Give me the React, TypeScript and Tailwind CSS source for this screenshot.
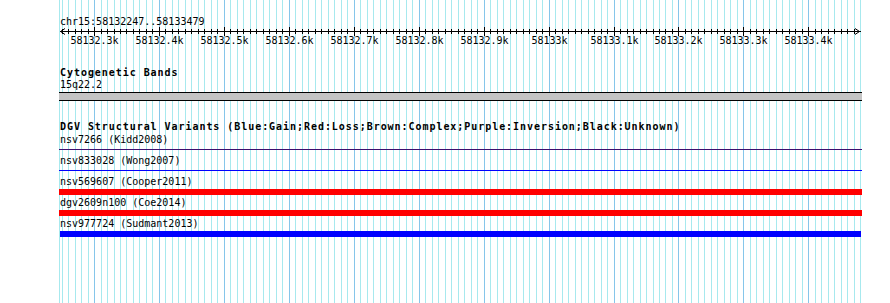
import React from "react";

const START = 58132247;
const PX_PER_BP = 0.6494;
const ORIGIN = 0.6; // where START sits inside the track (track left edge = 59px)

const toX = (bp: number) => ORIGIN + (bp - START) * PX_PER_BP;

interface Tick {
  bp: number;
  x: number;
  major: boolean;
}

const ticks: Tick[] = [];
for (let bp = 58132250; bp <= 58133480; bp += 10) {
  ticks.push({ bp, x: Math.round(toX(bp)), major: bp % 100 === 0 });
}

const majorLabel = (bp: number) => (bp % 1000 === 0 ? `${bp / 1000}k` : `${(bp / 1000).toFixed(1)}k`);

interface Variant {
  name: string;
  kind: "line" | "bar";
  color: string;
}

const variants: Variant[] = [
  { name: "nsv7266 (Kidd2008)", kind: "line", color: "bg-[#3c0f6e]" },
  { name: "nsv833028 (Wong2007)", kind: "line", color: "bg-[#0000ff]" },
  { name: "nsv569607 (Cooper2011)", kind: "bar", color: "bg-[#ff0000]" },
  { name: "dgv2609n100 (Coe2014)", kind: "bar", color: "bg-[#ff0000]" },
  { name: "nsv977724 (Sudmant2013)", kind: "bar", color: "bg-[#0000ff] ml-[1px] mr-[1px]" },
];

const Grid = () => (
  <svg className="absolute top-0 left-[59px] z-0" width={803} height={303}>
    <rect x={0} y={0} width={1} height={303} fill="#a7e9ee" />
    {ticks.map((t) => (
      <rect key={t.bp} x={t.x} y={0} width={1} height={303} fill={t.major ? "#86c6ea" : "#a7e9ee"} />
    ))}
  </svg>
);

const Ruler = () => (
  <svg className="block" width={803} height={9} shapeRendering="crispEdges">
    <rect x={1} y={4} width={801} height={1} fill="#000" />
    {ticks
      .filter((t) => t.x > 2 && t.x < 800)
      .map((t) => (
        <rect key={t.bp} x={t.x} y={t.major ? 0 : 2} width={1} height={t.major ? 9 : 5} fill="#000" />
      ))}
    <polyline points="6,1.5 1.5,4.5 6,7.5" fill="none" stroke="#000" strokeWidth={1} shapeRendering="auto" />
    <polyline points="796,1.5 800.5,4.5 796,7.5" fill="none" stroke="#000" strokeWidth={1} shapeRendering="auto" />
  </svg>
);

export default function App() {
  return (
    <div className="relative w-[890px] h-[303px] bg-white overflow-hidden text-black text-[10px] font-['DejaVu_Sans_Mono',monospace]">
      <Grid />

      <div className="relative z-10 ml-[59px] w-[803px] flex flex-col">
        {/* location + ruler */}
        <div className="mt-[17px] pl-[1px] leading-[10px]">chr15:58132247..58133479</div>
        <Ruler />
        <div className="relative h-[9px] leading-[9px]">
          {ticks
            .filter((t) => t.major)
            .map((t) => (
              <span key={t.bp} className="absolute top-0 -translate-x-1/2 whitespace-nowrap" style={{ left: t.x + 0.5 }}>
                {majorLabel(t.bp)}
              </span>
            ))}
        </div>

        {/* Cytogenetic bands */}
        <div className="mt-[22px] pl-[1px] leading-[12px] font-bold tracking-[0.95px]">Cytogenetic Bands</div>
        <div className="pl-[1px] leading-[12px]">15q22.2</div>
        <div className="mt-[1px] h-[9px] border-y border-black bg-[#c4c4c4]" />

        {/* DGV */}
        <div className="mt-[20px] pl-[1px] leading-[12px] font-bold tracking-[0.95px] whitespace-nowrap">
          DGV Structural Variants (Blue:Gain;Red:Loss;Brown:Complex;Purple:Inversion;Black:Unknown)
        </div>
        {variants.map((v) => (
          <div key={v.name} className="flex flex-col mb-[1px]">
            <div className="pl-[1px] leading-[14px] h-[14px] whitespace-nowrap">{v.name}</div>
            <div className="h-[6px] flex flex-col">
              {v.kind === "line" ? <div className={`mt-[2px] h-px ${v.color}`} /> : <div className={`h-[6px] ${v.color}`} />}
            </div>
          </div>
        ))}
      </div>
    </div>
  );
}
